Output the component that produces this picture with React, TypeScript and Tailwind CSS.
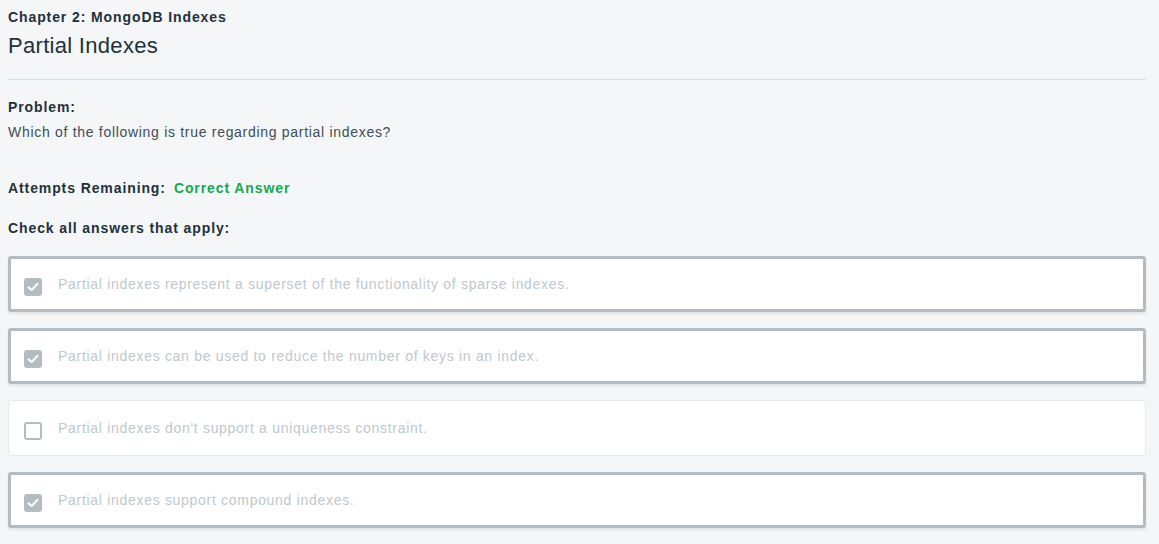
import React from "react";

const answers = [
  { text: "Partial indexes represent a superset of the functionality of sparse indexes.", checked: true },
  { text: "Partial indexes can be used to reduce the number of keys in an index.", checked: true },
  { text: "Partial indexes don't support a uniqueness constraint.", checked: false },
  { text: "Partial indexes support compound indexes.", checked: true },
];

function Check({ checked }: { checked: boolean }) {
  if (checked) {
    return (
      <div className="w-[18px] h-[18px] rounded-[3px] bg-[#b3bcc1] flex items-center justify-center shrink-0">
        <svg width="12" height="10" viewBox="0 0 12 10" fill="none">
          <path d="M1.5 5.2 L4.5 8 L10.5 2" stroke="white" strokeWidth="2" strokeLinecap="round" strokeLinejoin="round" />
        </svg>
      </div>
    );
  }
  return <div className="w-[18px] h-[18px] rounded-[3px] border-2 border-[#b3bcc1] bg-white shrink-0" />;
}

export default function App() {
  return (
    <div
      className="min-h-[544px] bg-[#f5f6f7] text-[#21313c] pl-2 pr-[13px] pt-[9px]"
      style={{ fontFamily: "'Liberation Sans', Arial, sans-serif" }}
    >
      <div className="text-[14px] font-bold leading-[16px] tracking-[0.9px]">Chapter 2: MongoDB Indexes</div>
      <div className="text-[22px] leading-[26px] mt-[8px] font-light tracking-[0.3px]">Partial Indexes</div>
      <div className="h-px bg-[#d6dcdf] mt-[20px]" />
      <div className="text-[14px] font-bold leading-[16px] mt-[19px] tracking-[0.9px]">Problem:</div>
      <div className="text-[14px] leading-[16px] mt-[9px] text-[#3d4f58] tracking-[0.7px]">
        Which of the following is true regarding partial indexes?
      </div>
      <div className="flex gap-[8px] text-[14px] font-bold leading-[16px] mt-[40px] tracking-[0.9px]">
        <span>Attempts Remaining:</span>
        <span className="text-[#13aa52]">Correct Answer</span>
      </div>
      <div className="text-[14px] font-bold leading-[16px] mt-[24px] tracking-[0.9px]">Check all answers that apply:</div>
      <div className="flex flex-col gap-[16px] mt-[20px]">
        {answers.map((a, i) => (
          <div
            key={i}
            className={
              a.checked
                ? "h-[56px] bg-white border-[3px] border-[#b3bcc1] rounded-[3px] shadow-[0_2px_3px_rgba(0,0,0,0.08)] flex items-center pl-[13px]"
                : "h-[56px] bg-white border border-[#e7eaec] rounded-[3px] flex items-center pl-[15px]"
            }
          >
            <div className="mt-[6px]">
              <Check checked={a.checked} />
            </div>
            <span className="ml-[16px] text-[14px] text-[#c0c8cd] leading-[16px] tracking-[0.7px]">{a.text}</span>
          </div>
        ))}
      </div>
    </div>
  );
}
